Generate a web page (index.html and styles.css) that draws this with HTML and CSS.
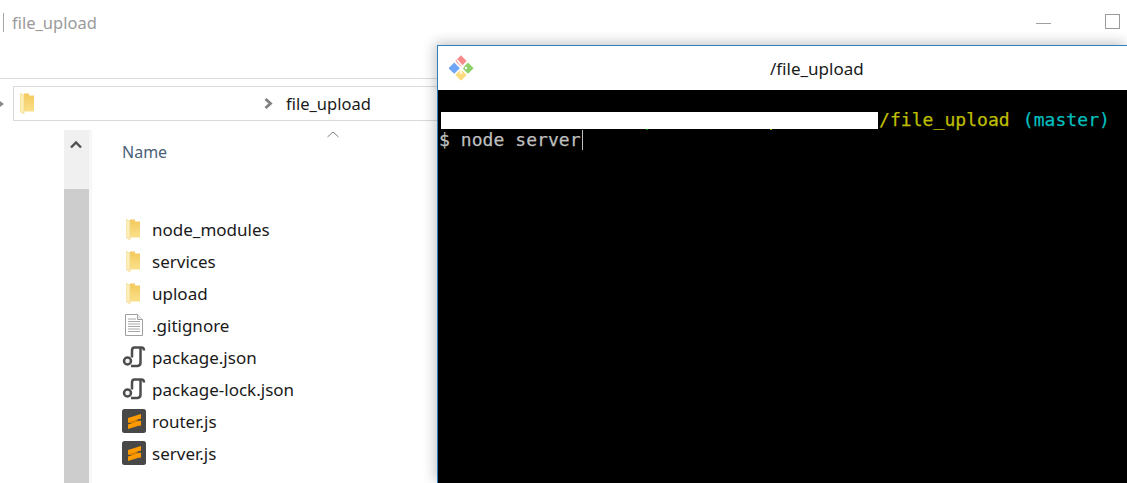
FILE: index.html
```html
<!DOCTYPE html>
<html lang="en">
<head>
<meta charset="utf-8">
<title>file_upload</title>
<link rel="stylesheet" href="styles.css">
</head>
<body>
<svg class="defs" width="0" height="0" aria-hidden="true">
  <defs>
    <linearGradient id="fold" x1="0" y1="0" x2="0" y2="1">
      <stop offset="0" stop-color="#f3c95c"/><stop offset="1" stop-color="#fbe08a"/>
    </linearGradient>
    <symbol id="folder" viewBox="0 0 14 21">
      <path d="M4 .5h5v2h5v16H4z" fill="url(#fold)"/>
      <path d="M0 .5l4 1.500V21l-4-2.500z" fill="#fdeeb8"/>
      <path d="M0 .5l4 1.500V21l-4-2.500z" fill="none" stroke="#f0d489" stroke-width=".6"/>
    </symbol>
    <symbol id="script" viewBox="0 0 24 24">
      <path d="M22 5.500C22 3.500 21 2.500 19.500 2.500H12.500C11 2.500 10 3.500 10 5.500V12.500" fill="none" stroke="#4d4d4d" stroke-width="2.500"/>
      <path d="M18.500 3V17.500C18.500 20 17 21 15 21H9" fill="none" stroke="#4d4d4d" stroke-width="2.500"/>
      <circle cx="5.500" cy="16" r="3.500" fill="#f4f4f4" stroke="#4d4d4d" stroke-width="2.500"/>
    </symbol>
    <symbol id="sublime" viewBox="0 0 24 24">
      <rect width="24" height="24" rx="2.500" fill="#484848"/>
      <path d="M6 9L19 12.500V17L6 13.500z" fill="#d98200"/>
      <path d="M6 9L19 5V9.500L6 13.500z" fill="#ff9a00"/>
      <path d="M6 15.500L19 11.500V16L6 20z" fill="#ff9a00"/>
    </symbol>
  </defs>
</svg>

<main class="explorer">
  <header class="titlebar">
    <span class="title-rule"></span>
    <span class="title-text">file_upload</span>
    <span class="win-controls">
      <span class="win-min"></span>
      <span class="win-max"></span>
    </span>
  </header>
  <div class="ribbon-rule"></div>
  <div class="address-row">
    <span class="back-dot"></span>
    <div class="address">
      <svg class="address-folder"><use href="#folder"/></svg>
      <span class="address-spacer"></span>
      <svg class="chevron" viewBox="0 0 9 11"><path d="M1.500 1l5 4.500-5 4.500" fill="none" stroke="#808080" stroke-width="2.800"/></svg>
      <span class="crumb">file_upload</span>
    </div>
  </div>
  <div class="content">
    <div class="scrollbar">
      <div class="scroll-btn">
        <svg width="12" height="9" viewBox="0 0 12 9"><path d="M1 7.500l5-5 5 5" fill="none" stroke="#505050" stroke-width="2.400"/></svg>
      </div>
      <div class="scroll-thumb"></div>
    </div>
    <div class="files">
      <div class="column-head">
        <span class="col-name">Name</span>
        <svg class="sort-caret" width="12" height="7" viewBox="0 0 12 7"><path d="M.5 6L6 1l5.500 5" fill="none" stroke="#7d7d7d"/></svg>
      </div>
      <ul class="file-list">
        <li class="file"><span class="file-icon"><svg class="icon-folder"><use href="#folder"/></svg></span>node_modules</li>
        <li class="file"><span class="file-icon"><svg class="icon-folder"><use href="#folder"/></svg></span>services</li>
        <li class="file"><span class="file-icon"><svg class="icon-folder"><use href="#folder"/></svg></span>upload</li>
        <li class="file"><span class="file-icon">
          <svg class="icon-doc" viewBox="0 0 18 22">
            <path d="M.5.500h12l5 5v16H.5z" fill="#fff" stroke="#a0a0a0"/>
            <path d="M12.500.500v5h5" fill="#eee" stroke="#a0a0a0"/>
            <path d="M3 5h8M3 7.500h12M3 10h12M3 12.500h12M3 15h12M3 17.500h12" stroke="#a8a8a8" stroke-width="1"/>
          </svg></span>.gitignore</li>
        <li class="file"><span class="file-icon"><svg class="icon-box"><use href="#script"/></svg></span>package.json</li>
        <li class="file"><span class="file-icon"><svg class="icon-box"><use href="#script"/></svg></span>package-lock.json</li>
        <li class="file"><span class="file-icon"><svg class="icon-box"><use href="#sublime"/></svg></span>router.js</li>
        <li class="file"><span class="file-icon"><svg class="icon-box"><use href="#sublime"/></svg></span>server.js</li>
      </ul>
    </div>
  </div>
</main>

<section class="terminal">
  <header class="term-bar">
    <svg class="git-logo" viewBox="0 0 26 26">
      <rect x="2.200" y="9.200" width="8" height="8" transform="rotate(45 6.200 13.200)" fill="#6ea6f5"/>
      <rect x="9" y="2" width="8" height="8" transform="rotate(45 13 6)" fill="#f98b8b"/>
      <rect x="16" y="9.200" width="8" height="8" transform="rotate(45 20 13.200)" fill="#8ed06a"/>
      <rect x="9" y="16" width="8" height="8" transform="rotate(45 13 20)" fill="#fbdc7d"/>
      <path d="M9 5l5 6M13 13v6M13 13l5-1" stroke="#fff" stroke-width="1.600" fill="none"/>
      <circle cx="18" cy="13" r="1.800" fill="#fff" stroke="#8ed06a"/>
    </svg>
    <span class="term-title">/file_upload</span>
  </header>
  <div class="term-body">
    <div class="term-line"><span class="redacted"></span><span class="path">/file_upload</span><span class="branch">(master)</span></div>
    <div class="term-line prompt">$ node server<span class="cursor"></span></div>
  </div>
</section>
</body>
</html>
```
FILE: styles.css
```css
* { box-sizing: border-box; }
html, body { margin: 0; height: 100%; }
body {
  width: 1127px;
  height: 483px;
  overflow: hidden;
  position: relative;
  background: #fff;
  font-family: "Noto Sans", "Open Sans", sans-serif;
}
.defs { position: absolute; }

.explorer { display: flex; flex-direction: column; height: 100%; }

.titlebar {
  height: 45px;
  flex: none;
  display: flex;
  align-items: flex-start;
  padding: 13px 7px 0 3px;
}
.title-rule { width: 1px; height: 19px; background: #a6a6a6; margin-right: 8px; }
.title-text { font-size: 16.500px; line-height: 20px; color: #9a9a9a; }
.win-controls { margin-left: auto; display: flex; align-items: center; gap: 54px; height: 16px; }
.win-min { width: 15px; height: 1px; background: #a0a0a0; margin-top: 5px; }
.win-max { width: 15px; height: 15px; border: 1px solid #9a9a9a; }

.ribbon-rule { margin-top: 33px; height: 1px; background: #d9d9d9; flex: none; }

.address-row { display: flex; align-items: center; margin-top: 7px; flex: none; }
.back-dot {
  width: 0; height: 0; margin-right: 9px;
  border-left: 4px solid #8a8a8a;
  border-top: 3px solid transparent;
  border-bottom: 3px solid transparent;
}
.address {
  flex: 1;
  height: 35px;
  border: 1px solid #d9d9d9;
  display: flex;
  align-items: center;
  padding-left: 6px;
}
.address-folder { width: 14px; height: 21px; flex: none; }
.address-spacer { width: 230px; flex: none; }
.chevron { width: 9px; height: 11px; flex: none; margin-right: 13px; }
.crumb { font-size: 16.500px; color: #1a1a1a; line-height: 22px; }

.content { display: flex; margin: 9px 0 0 64px; flex: 1; min-height: 0; }
.scrollbar {
  width: 28px;
  flex: none;
  background: #f0f0f0;
  border-right: 3px solid #f7f7f7;
  display: flex;
  flex-direction: column;
}
.scroll-btn { height: 59px; display: flex; justify-content: center; padding: 10px 1px 0 0; }
.scroll-thumb { flex: 1; background: #cdcdcd; }

.files { flex: 1; padding-left: 30px; min-width: 0; }
.column-head { height: 83px; position: relative; }
.col-name { display: block; font-size: 16px; line-height: 22px; padding-top: 11px; color: #4a5f78; }
.sort-caret { position: absolute; left: 205px; top: 1px; }

.file-list { list-style: none; margin: 0; padding: 0; }
.file {
  height: 32px;
  display: flex;
  align-items: center;
  font-size: 17px;
  color: #1a1a1a;
}
.file-icon { width: 30px; display: flex; align-items: center; flex: none; }
.icon-folder { width: 14px; height: 21px; margin-left: 4px; }
.icon-doc { width: 18px; height: 22px; margin-left: 3px; }
.icon-box { width: 24px; height: 24px; }

.terminal {
  position: absolute;
  left: 437px;
  top: 45px;
  width: 690px;
  height: 438px;
  border: 1px solid #2b7fc7;
  border-width: 1px 0 0 1px;
  background: #000;
  box-shadow: -2px -2px 12px rgba(0, 0, 0, .24);
  display: flex;
  flex-direction: column;
}
.term-bar {
  height: 44px;
  flex: none;
  background: #fff;
  display: flex;
  align-items: center;
  position: relative;
  padding-left: 10px;
}
.git-logo { width: 26px; height: 26px; }
.term-title {
  position: absolute;
  left: 332px;
  top: 12px;
  font-size: 17px;
  line-height: 22px;
  color: #1a1a1a;
}
.term-body {
  padding: 20px 0 0 2px;
  font-family: "DejaVu Sans Mono", monospace;
  font-size: 18px;
  letter-spacing: .06px;
  -webkit-text-stroke: .25px;
}
.term-line { height: 20px; line-height: 20px; white-space: pre; display: flex; align-items: center; }
.redacted { position: relative; width: 437px; height: 17px; background: #fff; flex: none; margin-left: 1px; }
.redacted::after {
  content: "";
  position: absolute;
  left: 205px;
  top: 17px;
  width: 2px;
  height: 1px;
  background: #00a000;
  box-shadow: 124px 0 #a0a000;
}
.path { color: #bfbf00; margin-left: 1px; }
.branch { color: #00bfbf; margin-left: 13px; }
.prompt { color: #bfbfbf; margin-left: -1px; }
.cursor { width: 1px; height: 20px; background: #bfbfbf; flex: none; margin-left: 1px; }
```
